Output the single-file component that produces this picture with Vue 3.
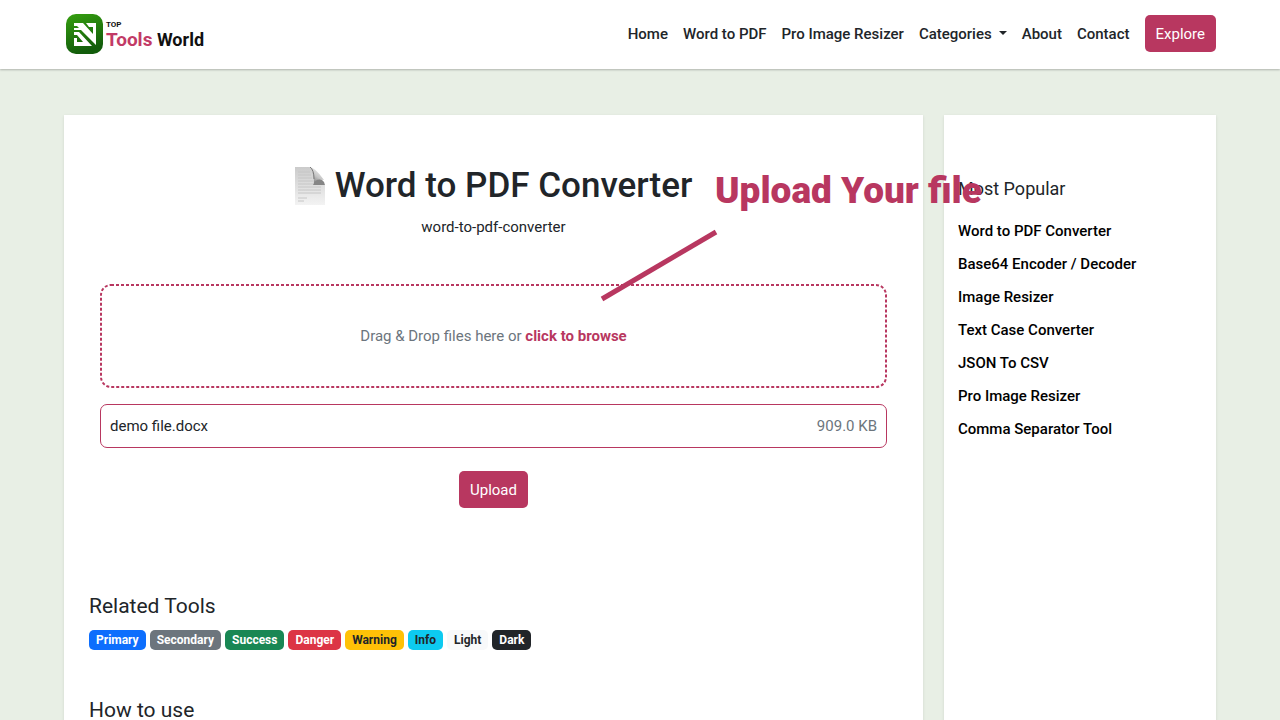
<script setup>
const popular = [
  'Word to PDF Converter', 'Base64 Encoder / Decoder', 'Image Resizer', 'Text Case Converter',
  'JSON To CSV', 'Pro Image Resizer', 'Comma Separator Tool',
]
const badges = ['Primary', 'Secondary', 'Success', 'Danger', 'Warning', 'Info', 'Light', 'Dark']
</script>

<template>
  <div class="page">
    <header class="header">
      <a class="brand" href="#">
        <svg class="logo" viewBox="0 0 37 40" aria-hidden="true">
          <defs>
            <linearGradient id="leaf" x1="0" y1="0" x2="0.3" y2="1">
              <stop offset="0" stop-color="#36a010" />
              <stop offset="1" stop-color="#125c0b" />
            </linearGradient>
          </defs>
          <rect width="37" height="40" rx="10" fill="url(#leaf)" />
          <path d="M8 9H17L27 20V13H23L20 9H30V31L15 16H8V14H13L11 12H8Z" fill="#fff" />
          <path d="M8 18H13L26 32H8V24H11V28H17L11 21H8Z" fill="#fff" />
        </svg>
        <span class="brand-text">
          <span class="brand-top">TOP</span>
          <span class="brand-name"><span class="accent">Tools</span> World</span>
        </span>
      </a>
      <nav class="nav">
        <a href="#">Home</a>
        <a href="#">Word to PDF</a>
        <a href="#">Pro Image Resizer</a>
        <a href="#" class="dropdown">Categories</a>
        <a href="#">About</a>
        <a href="#">Contact</a>
        <button class="btn" type="button">Explore</button>
      </nav>
    </header>

    <div class="layout">
      <main class="card main">
        <section class="tool">
          <h1>
            <svg class="doc" viewBox="0 0 30 38" aria-hidden="true">
              <defs>
                <linearGradient id="paper" x1="0" y1="0" x2="0" y2="1">
                  <stop offset="0" stop-color="#cbcbcb" />
                  <stop offset="1" stop-color="#f3f3f3" />
                </linearGradient>
                <linearGradient id="fold" x1="0.7" y1="0" x2="0.2" y2="1">
                  <stop offset="0" stop-color="#f4f4f4" />
                  <stop offset="0.5" stop-color="#c4c4c4" />
                  <stop offset="1" stop-color="#666" />
                </linearGradient>
              </defs>
              <path d="M0 0H15Q19 1 19 18H30V38H0Z" fill="url(#paper)" />
              <path d="M3 5H15M3 8H16M3 11H17M3 14H18M3 17H18M3 20H26M3 23H26M3 26H26M3 31H12M3 34H9" stroke="#c6c6c6" stroke-width="1" />
              <path d="M14 0Q20 0 29 13Q24 12 19 18Q19 4 14 0Z" fill="url(#fold)" />
              <path d="M15 0Q19 3 19 12" fill="none" stroke="#777" stroke-width="1" />
              <path d="M18 18Q21 11 27 13Q30 15 30 18Z" fill="#858585" />
            </svg>
            <span>Word to PDF Converter</span>
          </h1>
          <p class="slug">word-to-pdf-converter</p>
          <button class="dropzone" type="button">
            <svg class="outline" aria-hidden="true"><rect x="1" y="1" rx="10" /></svg>
            Drag &amp; Drop files here or <strong>click to browse</strong>
          </button>
          <div class="file"><span>demo file.docx</span><span class="muted">909.0 KB</span></div>
          <button class="btn" type="button">Upload</button>
        </section>
        <section class="related">
          <h2>Related Tools</h2>
          <div class="badges">
            <span v-for="b in badges" :key="b" class="badge" :class="b.toLowerCase()">{{ b }}</span>
          </div>
        </section>
        <section class="how">
          <h2>How to use</h2>
        </section>
        <div class="callout">Upload Your file</div>
        <svg class="pointer" viewBox="0 0 118 74" aria-hidden="true">
          <path d="M2 71L116 4" stroke="#b83760" stroke-width="5" />
        </svg>
      </main>
      <aside class="card side">
        <h3>Most Popular</h3>
        <ul>
          <li v-for="p in popular" :key="p"><a href="#">{{ p }}</a></li>
        </ul>
      </aside>
    </div>
  </div>
</template>

<style>
body { margin: 0; background: #e8efe5; }
</style>

<style scoped>
.page {
  height: 100vh;
  overflow: hidden;
  display: flex;
  flex-direction: column;
  background: #e8efe5;
  color: #212529;
  font: 15px/22px Roboto, "Liberation Sans", sans-serif;
}
* { box-sizing: border-box; }
h1, h2, h3, p, ul { margin: 0; padding: 0; }
a { color: inherit; text-decoration: none; }
.header {
  flex: none;
  display: flex;
  align-items: center;
  justify-content: space-between;
  height: 69px;
  padding: 0 64px 2px;
  background: #fff;
  box-shadow: 0 1px 2px rgba(0, 0, 0, 0.25);
}
.brand { display: flex; gap: 3px; padding-left: 2px; }
.logo { width: 37px; height: 40px; }
.brand-text { display: flex; flex-direction: column; padding-top: 6px; color: #111; }
.brand-top { font-size: 8px; font-weight: 700; line-height: 9px; }
.brand-name { font-size: 18px; font-weight: 700; line-height: 22px; }
.accent { font-size: 19px; color: #c23a66; }
.nav { display: flex; align-items: center; gap: 15px; font-weight: 500; }
.dropdown::after {
  content: "";
  display: inline-block;
  margin-left: 7px;
  vertical-align: 4px;
  border: 4px solid transparent;
  border-top-color: currentColor;
  border-bottom: 0;
}
.btn {
  height: 37px;
  padding: 0 11px;
  border: 0;
  border-radius: 5px;
  background: #b83760;
  color: #fff;
  font: inherit;
  font-weight: 400;
}
.layout {
  flex: 1;
  display: grid;
  grid-template-columns: minmax(0, 1fr) 272px;
  gap: 21px;
  padding: 46px 64px 0;
}
.card { background: #fff; box-shadow: 0 1px 3px rgba(0, 0, 0, 0.1); }
.main { position: relative; padding: 48px 25px 0; }
.tool { display: flex; flex-direction: column; align-items: center; padding: 0 11px; }
h1 { display: flex; align-items: center; gap: 10px; font-size: 35px; font-weight: 500; line-height: 46px; }
.doc { width: 30px; height: 38px; }
.slug { margin-top: 7px; }
.dropzone {
  position: relative;
  width: 100%;
  height: 104px;
  margin-top: 46px;
  padding: 0;
  border: 0;
  border-radius: 11px;
  background: #fff;
  color: #6c757d;
  font: inherit;
}
.outline { position: absolute; inset: 0; width: 100%; height: 100%; }
.outline rect {
  width: calc(100% - 2px);
  height: calc(100% - 2px);
  fill: none;
  stroke: #b83760;
  stroke-width: 2px;
  stroke-dasharray: 3 2;
}
.dropzone strong { color: #b83760; font-weight: 700; }
.file {
  display: flex;
  align-items: center;
  justify-content: space-between;
  width: 100%;
  height: 44px;
  margin: 16px 0 23px;
  padding: 0 9px;
  border: 1px solid #b83760;
  border-radius: 7px;
}
.muted { color: #6c757d; }
.related { margin-top: 84px; }
h2 { font-size: 21px; font-weight: 400; line-height: 28px; }
.badges { display: flex; gap: 4px; margin-top: 10px; }
.badge {
  padding: 0 7px;
  border-radius: 5px;
  color: #fff;
  font-size: 12px;
  font-weight: 700;
  line-height: 20px;
}
.primary { background: #0d6efd; }
.secondary { background: #6c757d; }
.success { background: #198754; }
.danger { background: #dc3545; }
.warning { background: #ffc107; color: #212529; }
.info { background: #0dcaf0; color: #212529; }
.light { background: #f8f9fa; color: #212529; }
.dark { background: #212529; }
.how { margin-top: 46px; }
.callout {
  position: absolute;
  z-index: 1;
  top: 54px;
  left: 651px;
  color: #b83760;
  font-size: 37px;
  font-weight: 900;
  line-height: 44px;
  white-space: nowrap;
}
.pointer { position: absolute; top: 113px; left: 536px; width: 118px; height: 74px; }
.side { padding: 62px 14px 0; }
h3 { font-size: 18px; font-weight: 400; line-height: 24px; }
ul { margin-top: 14px; list-style: none; color: #000; font-weight: 500; line-height: 33px; }
</style>
